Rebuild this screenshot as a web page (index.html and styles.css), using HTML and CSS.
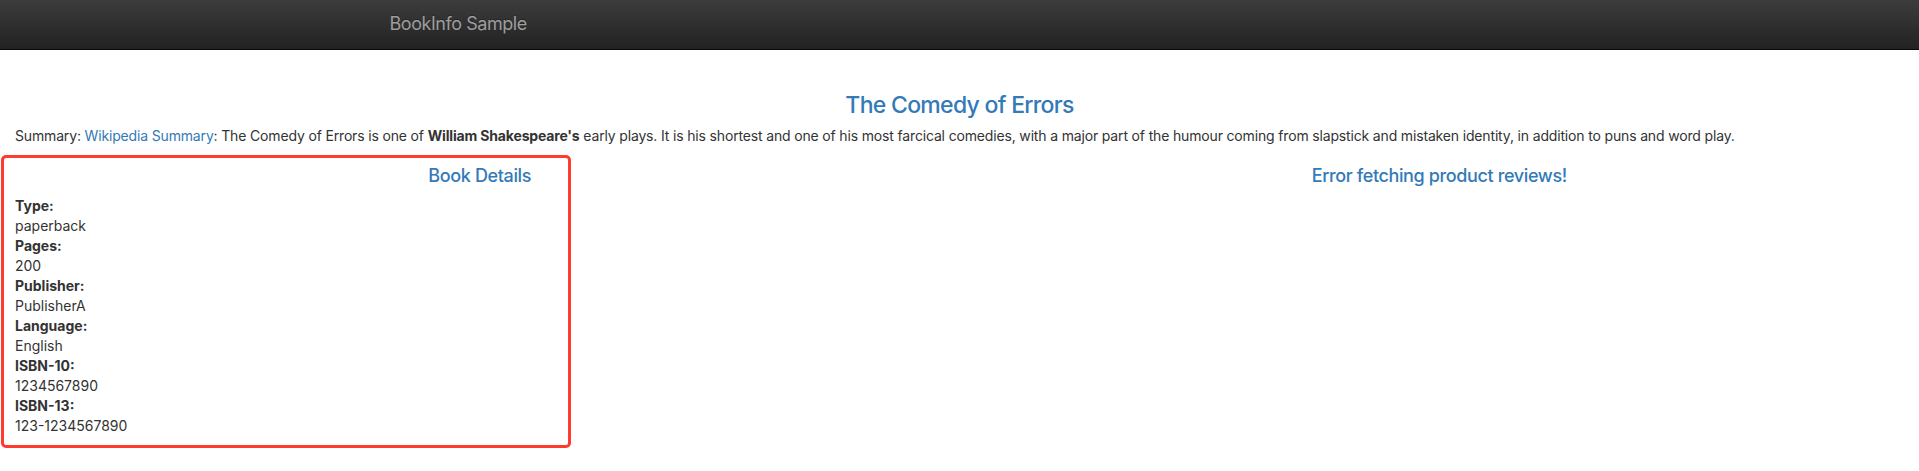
FILE: index.html
```html
<!DOCTYPE html>
<html lang="en">
<head>
<meta charset="utf-8">
<title>Simple Bookstore App</title>
<link rel="stylesheet" href="styles.css">
</head>
<body>
<nav class="navbar">
  <div class="navbar-container">
    <a class="navbar-brand" href="#">BookInfo Sample</a>
  </div>
</nav>
<div class="page">
  <div class="row-full">
    <h3 class="title">The Comedy of Errors</h3>
    <p class="summary">Summary: <a href="#">Wikipedia Summary</a>: The Comedy of Errors is one of <b>William Shakespeare's</b> early plays. It is his shortest and one of his most farcical comedies, with a major part of the humour coming from slapstick and mistaken identity, in addition to puns and word play.</p>
  </div>
  <div class="row-split">
    <div class="highlight"></div>
    <div class="col">
      <h4 class="col-title">Book Details</h4>
      <dl class="details">
        <dt>Type:</dt><dd>paperback</dd>
        <dt>Pages:</dt><dd>200</dd>
        <dt>Publisher:</dt><dd>PublisherA</dd>
        <dt>Language:</dt><dd>English</dd>
        <dt>ISBN-10:</dt><dd>1234567890</dd>
        <dt>ISBN-13:</dt><dd>123-1234567890</dd>
      </dl>
    </div>
    <div class="col">
      <h4 class="col-title">Error fetching product reviews!</h4>
    </div>
  </div>
</div>
</body>
</html>
```
FILE: styles.css
```css
* { box-sizing: border-box; }
html, body { margin: 0; padding: 0; }
body {
  font-family: Inter, "Liberation Sans", sans-serif;
  font-size: 14px;
  line-height: 20px;
  color: #333;
  background: #fff;
  overflow: hidden;
}
a { color: #337ab7; text-decoration: none; }
b { font-weight: 700; }

.navbar {
  height: 50px;
  background-image: linear-gradient(to bottom, #3c3c3c 0, #222 100%);
  border-bottom: 1px solid #080808;
  margin-bottom: 42px;
}
.navbar-container {
  width: 1170px;
  margin: 0 auto;
  padding: 0 15px;
}
.navbar-brand {
  display: inline-block;
  padding: 14px 0 0 0;
  font-size: 18px;
  line-height: 20px;
  letter-spacing: -0.45px;
  color: #9d9d9d;
  text-shadow: 0 -1px 0 rgba(0,0,0,.25);
}

.page { padding: 0 15px; }
.title {
  margin: 42px 0 8px;
  font-size: 23px;
  line-height: 26.4px;
  font-weight: 500;
  letter-spacing: -0.7px;
  text-align: center;
  color: #337ab7;
}
.summary { margin: 0 0 10px; letter-spacing: -0.16px; }

.row-split {
  position: relative;
  display: grid;
  grid-template-columns: 1fr 1fr;
  margin: 0 -15px;
}
.col { padding: 0 15px; }
.col-title {
  margin: 10px 0;
  font-size: 18px;
  line-height: 19.8px;
  font-weight: 500;
  letter-spacing: -0.37px;
  text-align: center;
  color: #337ab7;
}
.details { margin: 0 0 20px; }
.details dt { font-weight: 700; }
.details dd { margin: 0; }

.highlight {
  position: absolute;
  left: 1px;
  top: -1px;
  width: 570px;
  height: 293px;
  border: 3px solid #ff3b30;
  border-radius: 5px;
  pointer-events: none;
}
```
